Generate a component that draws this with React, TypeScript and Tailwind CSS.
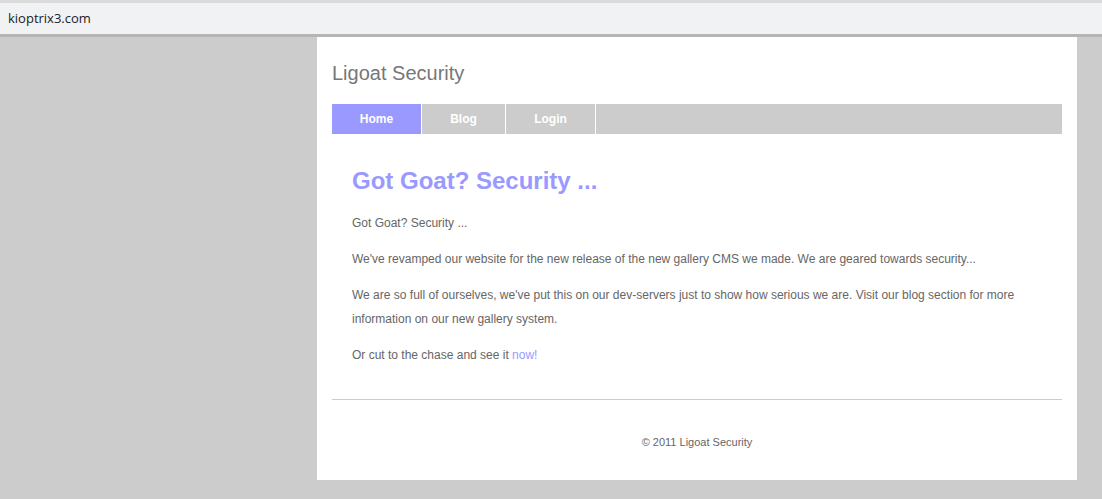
import React from "react";

export default function App() {
  return (
    <div className="min-h-[499px] bg-[#cccccc]" style={{ fontFamily: "'Liberation Sans', Arial, sans-serif" }}>
      <div className="h-[37px] bg-[#f1f2f4] border-t-[3px] border-t-[#dadada] border-b-[3px] border-b-[#b5b5b5] flex items-center">
        <span className="pl-[8px] text-[13px] text-[#222] leading-none" style={{ fontFamily: "'Open Sans', 'Noto Sans', sans-serif" }}>
          kioptrix3.com
        </span>
      </div>
      <div className="ml-[317px] w-[760px] bg-white px-[15px]">
        <div className="pt-[24px] pb-[19px]">
          <h1 className="text-[20px] leading-[24px] text-[#777777]">Ligoat Security</h1>
        </div>
        <nav className="h-[30px] bg-[#cccccc] flex">
          <a className="w-[90px] h-full bg-[#9999ff] border-r border-white flex items-center justify-center text-white font-bold text-[12px]">Home</a>
          <a className="w-[84px] h-full border-r border-white flex items-center justify-center text-white font-bold text-[12px]">Blog</a>
          <a className="w-[90px] h-full border-r border-white flex items-center justify-center text-white font-bold text-[12px]">Login</a>
        </nav>
        <div className="px-[20px] pt-[32px] pb-[32px] text-[12px] leading-[24px] text-[#666666]">
          <h2 className="text-[24px] leading-[30px] font-bold text-[#9999ff] mb-[15px]">Got Goat? Security ...</h2>
          <p className="mb-[12px]">Got Goat? Security ...</p>
          <p className="mb-[12px]">We've revamped our website for the new release of the new gallery CMS we made. We are geared towards security...</p>
          <p className="mb-[12px]">
            We are so full of ourselves, we've put this on our dev-servers just to show how serious we are. Visit our blog section for more information on our new gallery system.
          </p>
          <p>
            Or cut to the chase and see it <a className="text-[#9999ff]">now!</a>
          </p>
        </div>
        <div className="h-px bg-[#cccccc]" />
        <div className="pt-[34px] pb-[30px] text-center text-[11px] leading-[16px] text-[#666666]">© 2011 Ligoat Security</div>
      </div>
    </div>
  );
}
